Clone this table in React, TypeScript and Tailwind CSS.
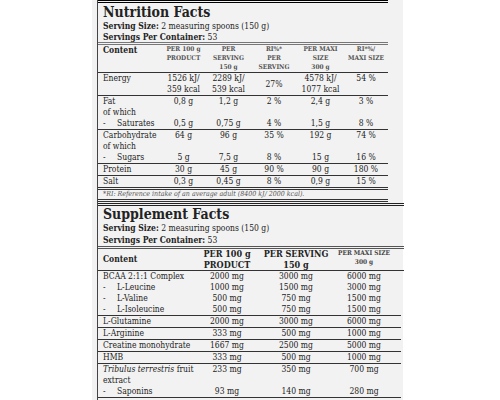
import React from "react";

const serif = "font-['DejaVu_Serif_Condensed','Liberation_Serif',serif]";

type NutRow = {
  label: string;
  indent?: boolean;
  vals?: string[];
  line?: "single" | "double";
};

const nutRows: NutRow[] = [
  { label: "Fat", vals: ["0,8 g", "1,2 g", "2 %", "2,4 g", "3 %"] },
  { label: "of which" },
  { label: "Saturates", indent: true, vals: ["0,5 g", "0,75 g", "4 %", "1,5 g", "8 %"], line: "single" },
  { label: "Carbohydrate", vals: ["64 g", "96 g", "35 %", "192 g", "74 %"] },
  { label: "of which" },
  { label: "Sugars", indent: true, vals: ["5 g", "7,5 g", "8 %", "15 g", "16 %"], line: "single" },
  { label: "Protein", vals: ["30 g", "45 g", "90 %", "90 g", "180 %"], line: "single" },
  { label: "Salt", vals: ["0,3 g", "0,45 g", "8 %", "0,9 g", "15 %"], line: "double" },
];

type SupRow = {
  label: React.ReactNode;
  indent?: boolean;
  vals?: string[];
  line?: boolean;
};

const supRows: SupRow[] = [
  { label: "BCAA 2:1:1 Complex", vals: ["2000 mg", "3000 mg", "6000 mg"] },
  { label: "L-Leucine", indent: true, vals: ["1000 mg", "1500 mg", "3000 mg"] },
  { label: "L-Valine", indent: true, vals: ["500 mg", "750 mg", "1500 mg"] },
  { label: "L-Isoleucine", indent: true, vals: ["500 mg", "750 mg", "1500 mg"], line: true },
  { label: "L-Glutamine", vals: ["2000 mg", "3000 mg", "6000 mg"], line: true },
  { label: "L-Arginine", vals: ["333 mg", "500 mg", "1000 mg"], line: true },
  { label: "Creatine monohydrate", vals: ["1667 mg", "2500 mg", "5000 mg"], line: true },
  { label: "HMB", vals: ["333 mg", "500 mg", "1000 mg"], line: true },
  {
    label: (
      <>
        <i>Tribulus terrestris</i> fruit
      </>
    ),
    vals: ["233 mg", "350 mg", "700 mg"],
  },
  { label: "extract" },
  { label: "Saponins", indent: true, vals: ["93 mg", "140 mg", "280 mg"], line: true },
];

const nutCols = "grid grid-cols-[63px_45px_45px_46px_47px_44px]";
const supCols = "grid grid-cols-[93px_72px_66px_70px]";

function Label({ text, indent }: { text: React.ReactNode; indent?: boolean }) {
  if (!indent) return <div className="pl-[5px] whitespace-nowrap">{text}</div>;
  return (
    <div className="pl-[5px] flex whitespace-nowrap">
      <span className="w-[14px]">-</span>
      <span>{text}</span>
    </div>
  );
}

export default function App() {
  return (
    <div className={`w-[500px] h-[400px] bg-white overflow-hidden text-[#222] ${serif}`}>
      <div className="ml-[92px] w-[311px] h-full bg-[#f2f2f2] pl-[5px]">
        <div className="border-l border-[#444] h-full">
          {/* Nutrition Facts */}
          <div className="w-[290px] border-t-[3px] border-double border-black">
            <div className="pl-[5px]">
              <h2 className="text-[14px] font-bold leading-[18px]">Nutrition Facts</h2>
              <p className="text-[8.5px] leading-[10.5px] whitespace-nowrap">
                <b>Serving Size:</b> 2 measuring spoons (150 g)
              </p>
              <p className="text-[8.5px] leading-[10.5px] whitespace-nowrap">
                <b>Servings Per Container:</b> 53
              </p>
            </div>
            <div className={`${nutCols} border-t-[3px] border-double border-[#777] border-b border-b-[#333] h-[31px]`}>
              <div className="pl-[5px] text-[8.5px] font-bold leading-[10px]">Content</div>
              {[
                ["PER 100 g", "PRODUCT"],
                ["PER", "SERVING", "150 g"],
                ["RI%*", "PER", "SERVING"],
                ["PER MAXI", "SIZE", "300 g"],
                ["RI*%/", "MAXI SIZE"],
              ].map((h, i) => (
                <div key={i} className="text-center text-[6.5px] font-bold leading-[9px] text-[#555]">
                  {h.map((t) => (
                    <div key={t}>{t}</div>
                  ))}
                </div>
              ))}
            </div>
            <div className={`${nutCols} text-[8.5px] leading-[11px] border-b border-[#333]`}>
              <Label text="Energy" />
              <div className="text-center">1526 kJ/<br />359 kcal</div>
              <div className="text-center">2289 kJ/<br />539 kcal</div>
              <div className="text-center self-center">27%</div>
              <div className="text-center">4578 kJ/<br />1077 kcal</div>
              <div className="text-center">54 %</div>
            </div>
            {nutRows.map((r, i) => (
              <div
                key={i}
                className={`${nutCols} text-[8.5px] leading-[11px] ${
                  r.line === "single"
                    ? "border-b border-[#333]"
                    : r.line === "double"
                    ? "border-b-[3px] border-double border-[#333]"
                    : ""
                }`}
              >
                <Label text={r.label} indent={r.indent} />
                {(r.vals ?? []).map((v, j) => (
                  <div key={j} className="text-center">
                    {v}
                  </div>
                ))}
              </div>
            ))}
            <div className="pl-[5px] text-[7px] italic leading-[9px] text-[#555] border-b-[3px] border-double border-[#333] whitespace-nowrap">
              *RI: Reference intake of an average adult (8400 kJ/ 2000 kcal).
            </div>
          </div>

          {/* Supplement Facts */}
          <div className="mt-[1px] w-[306px] border-t-[3px] border-double border-[#222]">
            <div className="pl-[5px]">
              <h2 className="text-[14px] font-bold leading-[16px]">Supplement Facts</h2>
              <p className="text-[8.5px] leading-[12px] whitespace-nowrap">
                <b>Serving Size:</b> 2 measuring spoons (150 g)
              </p>
              <p className="text-[8.5px] leading-[12px] whitespace-nowrap">
                <b>Servings Per Container:</b> 53
              </p>
            </div>
            <div className={`${supCols} border-t-[3px] border-double border-[#555] border-b border-b-[#333] h-[25px]`}>
              <div className="pl-[5px] text-[8.5px] font-bold self-center leading-[11px]">Content</div>
              <div className="text-center text-[9px] font-bold leading-[10.5px]">
                PER 100 g<br />PRODUCT
              </div>
              <div className="text-center text-[9px] font-bold leading-[10.5px]">
                PER SERVING<br />150 g
              </div>
              <div className="text-center text-[6.5px] font-bold leading-[9px] text-[#444]">
                PER MAXI SIZE<br />300 g
              </div>
            </div>
            {supRows.map((r, i) => (
              <div
                key={i}
                className={`${supCols} w-[303px] text-[8.5px] leading-[11px] ${r.line ? "border-b border-[#333]" : ""}`}
              >
                <Label text={r.label} indent={r.indent} />
                {(r.vals ?? []).map((v, j) => (
                  <div key={j} className="text-center">
                    {v}
                  </div>
                ))}
              </div>
            ))}
          </div>
        </div>
      </div>
    </div>
  );
}
